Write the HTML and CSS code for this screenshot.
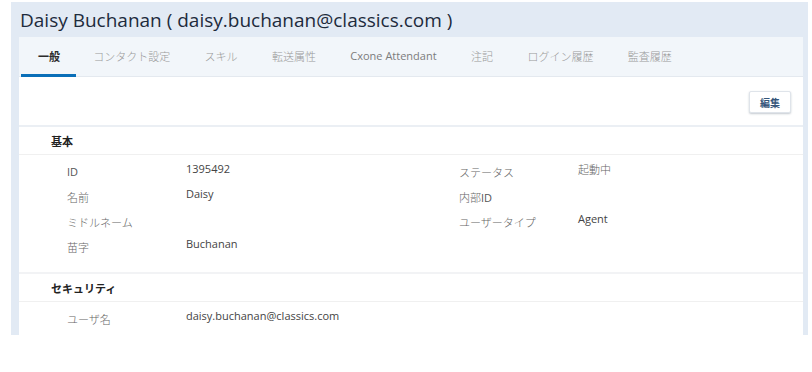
FILE: index.html
```html
<!DOCTYPE html>
<html lang="ja">
<head>
<meta charset="utf-8">
<title>Daisy Buchanan</title>
<link rel="stylesheet" href="styles.css">
</head>
<body>
<div class="frame">
  <h1 class="title">Daisy Buchanan ( daisy.buchanan@classics.com )</h1>
  <div class="panel">
    <nav class="tabs">
      <span class="tab active">一般</span>
      <span class="tab">コンタクト設定</span>
      <span class="tab">スキル</span>
      <span class="tab">転送属性</span>
      <span class="tab latin">Cxone Attendant</span>
      <span class="tab">注記</span>
      <span class="tab">ログイン履歴</span>
      <span class="tab">監査履歴</span>
    </nav>
    <div class="toolbar">
      <button class="btn">編集</button>
    </div>
    <section class="section">
      <div class="section-head">基本</div>
      <div class="fields">
        <div class="col">
          <div class="row"><span class="label">ID</span><span class="value">1395492</span></div>
          <div class="row"><span class="label"><span class="jp">名前</span></span><span class="value">Daisy</span></div>
          <div class="row"><span class="label"><span class="jp">ミドルネーム</span></span><span class="value"></span></div>
          <div class="row"><span class="label"><span class="jp">苗字</span></span><span class="value">Buchanan</span></div>
        </div>
        <div class="col">
          <div class="row"><span class="label"><span class="jp">ステータス</span></span><span class="value"><span class="jp">起動中</span></span></div>
          <div class="row"><span class="label"><span class="jp">内部</span>ID</span><span class="value"></span></div>
          <div class="row"><span class="label"><span class="jp">ユーザータイプ</span></span><span class="value">Agent</span></div>
        </div>
      </div>
    </section>
    <section class="section section-last">
      <div class="section-head">セキュリティ</div>
      <div class="fields">
        <div class="col">
          <div class="row"><span class="label"><span class="jp">ユーザ名</span></span><span class="value">daisy.buchanan@classics.com</span></div>
        </div>
      </div>
    </section>
  </div>
</div>
</body>
</html>
```

FILE: styles.css
```css
* { box-sizing: border-box; }
html, body { margin: 0; padding: 0; background: #ffffff; }
body {
  font-family: "Open Sans", "Noto Sans CJK JP", sans-serif;
  color: #333;
}
.frame {
  margin: 2px 0 0 11px;
  width: 797px;
  background: #e2eaf4;
  padding: 0 5px 0 8px;
}
.title {
  margin: 0;
  height: 35px;
  display: flex;
  align-items: center;
  padding-left: 1px;
  font-size: 19px;
  font-weight: 400;
  color: #1d2b3c;
  white-space: nowrap;
}
.panel {
  background: #ffffff;
}
.tabs {
  display: flex;
  height: 40px;
  background: #f2f6fa;
  border-bottom: 1px solid #e4e9ef;
  padding-left: 1.5px;
}
.tab {
  display: flex;
  align-items: center;
  padding: 0 17.2px;
  font-size: 11px;
  font-weight: 300;
  color: #999;
  white-space: nowrap;
  border-bottom: 3px solid transparent;
  margin-bottom: -1px;
}
.tab.latin { color: #7c7c7c; font-weight: 400; }
.tab.active {
  color: #2b2b2b;
  font-weight: 700;
  border-bottom-color: #0a6fb8;
  padding: 0 16px 0 17.5px;
}
.toolbar {
  height: 50px;
  display: flex;
  justify-content: flex-end;
  align-items: flex-start;
  padding: 14px 12px 0 0;
  border-bottom: 2px solid #ebeff4;
}
.btn {
  width: 42px;
  height: 22px;
  background: #fff;
  border: 1px solid #dfe4ea;
  border-radius: 2px;
  box-shadow: 0 1px 2px rgba(60, 80, 100, 0.3);
  font-family: "Noto Sans CJK JP", sans-serif;
  font-size: 10px;
  font-weight: 700;
  color: #34557a;
  padding: 0;
}
.section {
  border-bottom: 2px solid #f2f3f5;
}
.section-last { border-bottom: none; }
.section-head {
  height: 28px;
  display: flex;
  align-items: center;
  padding-left: 32px;
  font-size: 11px;
  font-weight: 700;
  color: #222;
  border-bottom: 1px solid #f0f0f0;
}
.fields {
  display: grid;
  grid-template-columns: 392px 392px;
  padding: 4px 0 13px;
}
.section-last .fields { padding-bottom: 4px; }
.col { padding-left: 48px; }
.row {
  display: flex;
  height: 25px;
  font-size: 11px;
}
.label {
  width: 119px;
  padding-top: 5px;
  color: #555;
  font-weight: 400;
  white-space: nowrap;
}
.value {
  padding-top: 2px;
  color: #444;
  font-weight: 400;
  white-space: nowrap;
}
.jp {
  font-weight: 300;
  color: #666;
}
```
